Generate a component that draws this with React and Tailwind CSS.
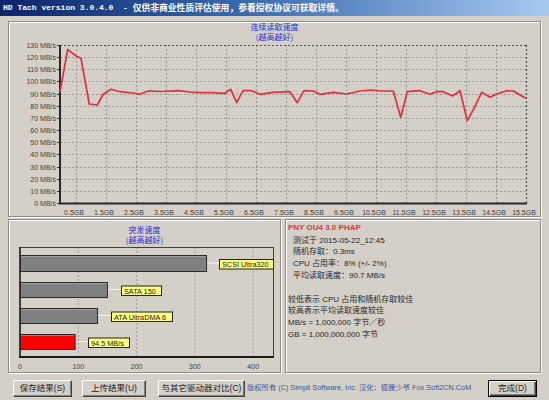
import React from "react";

const pts = [[60,92],[67.7,49.3],[76,56],[81,58.3],[89.3,104],[97.3,105],[103,94.5],[111,89.3],[120,91.7],[133,93],[140,94.3],[148,91],[163,91.5],[178,90.7],[190,92],[200,92.7],[212,92.7],[225,93.3],[230.7,89.3],[236.7,102.7],[243,90.7],[251.7,90.7],[260,94.3],[273,92.3],[290,91.7],[297.3,102.7],[304,90.7],[313,91],[320,94.3],[333,92.3],[346.7,94],[360,91],[371.7,90],[380,91],[393.3,91],[400.7,117.3],[407.3,91.7],[420,90.7],[430,94.3],[436.7,91.7],[443.3,91.7],[452.7,96],[460,90.7],[467.3,120.7],[474,108.3],[481.7,92.3],[490,97.3],[496.7,94],[506.7,90.7],[513.3,91],[525.7,98.3]];

const PY = (v) => Math.round(203 - v * 1.2154) + 0.5;

function ReadChart() {
  const yl = [];
  for (let v = 0; v <= 130; v += 10) yl.push(v);
  const xs = [];
  for (let i = 0; i <= 15; i++) xs.push(i);
  return (
    <svg width="532" height="175" className="block" fontFamily="'Liberation Sans', sans-serif">
      <g transform="translate(-9,-41)">
        {yl.map((v) =>
          v > 0 && v < 130 ? (
            <line key={"h" + v} x1="60" x2="526" y1={PY(v)} y2={PY(v)} stroke="#9c9a94" strokeWidth="1" strokeDasharray="2,2" />
          ) : null
        )}
        {xs.map((i) =>
          i < 15 ? (
            <line key={"v" + i} x1={76.5 + 30 * i} x2={76.5 + 30 * i} y1="45" y2="203" stroke="#9c9a94" strokeWidth="1" strokeDasharray="2,2" />
          ) : null
        )}
        <line x1="60" x2="526" y1="45.5" y2="45.5" stroke="#505050" strokeWidth="1.2" strokeDasharray="2,2" />
        <line x1="526.5" x2="526.5" y1="45" y2="203" stroke="#505050" strokeWidth="1.2" strokeDasharray="2,2" />
        <line x1="60" x2="60" y1="45" y2="204" stroke="#2a2a2a" strokeWidth="2" />
        <line x1="59" x2="527" y1="203.5" y2="203.5" stroke="#2a2a2a" strokeWidth="2" />
        {yl.map((v) => (
          <g key={"yl" + v}>
            <line x1="57" x2="60" y1={PY(v)} y2={PY(v)} stroke="#2a2a2a" strokeWidth="1" />
            <text x="56" y={PY(v) + 2.5} fontSize="7" fill="#404040" textAnchor="end">{v} MB/s</text>
          </g>
        ))}
        {xs.map((i) => (
          <text key={"xl" + i} x={74 + 30 * i} y="214.5" fontSize="7" fill="#404040" textAnchor="middle">{i}.5GB</text>
        ))}
        <polyline points={pts.map((p) => p.join(",")).join(" ")} fill="none" stroke="#e0303c" strokeWidth="1.7" strokeLinejoin="round" />
      </g>
    </svg>
  );
}

function BurstChart() {
  const s = 0.583;
  const bars = [
    { y: 255, h: 16, v: 320, fill: "#808080", label: "SCSI Ultra320", lx: 219, lw: 54, ly: 259 },
    { y: 282, h: 15, v: 150, fill: "#808080", label: "SATA 150", lx: 121, lw: 40, ly: 285.5 },
    { y: 308, h: 15, v: 133, fill: "#808080", label: "ATA UltraDMA 6", lx: 111, lw: 61, ly: 311.5 },
    { y: 334, h: 15, v: 94.5, fill: "#ff0000", label: "94.5 MB/s", lx: 88, lw: 41, ly: 337.5 },
  ];
  return (
    <svg width="271" height="127" className="block" fontFamily="'Liberation Sans', sans-serif">
      <g transform="translate(-9,-245)">
        {[100, 200, 300, 400].map((v) => (
          <line key={v} x1={20 + v * s} x2={20 + v * s} y1="247" y2="357" stroke="#9c9a94" strokeWidth="1" strokeDasharray="2,2" />
        ))}
        <line x1="20" x2="274" y1="247.5" y2="247.5" stroke="#404040" strokeWidth="1" />
        <line x1="273.5" x2="273.5" y1="247" y2="357" stroke="#404040" strokeWidth="1" />
        <line x1="20" x2="20" y1="247" y2="358" stroke="#1a1a1a" strokeWidth="1.6" />
        <line x1="19" x2="274" y1="357" y2="357" stroke="#1a1a1a" strokeWidth="2" />
        {bars.map((b) => {
          const x2 = 20 + b.v * s;
          const cy = b.y + b.h / 2;
          return (
            <g key={b.label}>
              <line x1={x2} x2={b.lx} y1={cy} y2={cy} stroke="#f4f4f4" strokeWidth="1" />
              <rect x="20.5" y={b.y + 0.5} width={x2 - 20.5} height={b.h} fill={b.fill} stroke="#2a2a2a" strokeWidth="1" />
              <line x1="21.5" x2={x2 - 1} y1={b.y + 1.5} y2={b.y + 1.5} stroke={b.fill === "#ff0000" ? "#ff5a5a" : "#a0a0a0"} strokeWidth="1" />
              <rect x={b.lx + 0.5} y={b.ly + 0.5} width={b.lw} height="9.5" fill="#ffff80" stroke="#202020" strokeWidth="1" />
              <text x={b.lx + 3} y={b.ly + 8} fontSize="7.3" fill="#1a1a1a">{b.label}</text>
            </g>
          );
        })}
        {[0, 100, 200, 300, 400].map((v) => (
          <text key={"t" + v} x={20 + v * s} y="368.5" fontSize="7" fill="#404040" textAnchor="middle">{v}</text>
        ))}
      </g>
    </svg>
  );
}

const etched = "border border-[#8e8b84] shadow-[inset_1px_1px_0_#ffffff,1px_1px_0_#ffffff]";
const btn = "h-[17px] flex items-center justify-center bg-[#d4d0c8] border border-t-white border-l-white border-r-[#404040] border-b-[#404040] shadow-[inset_-1px_-1px_0_#808080] text-[8.5px] text-[#222] whitespace-nowrap";

export default function App() {
  return (
    <div className="w-[549px] h-[400px] bg-[#d4d0c8] overflow-hidden flex flex-col font-['Liberation_Sans','Noto_Sans_CJK_SC',sans-serif]">
      <div className="h-[16px] shrink-0 flex items-center pl-[3px] bg-[linear-gradient(to_right,#0a246a,#3a6ab0_45%,#a6caf0)] text-white whitespace-nowrap leading-[16px]">
        <span className="font-['Liberation_Mono',monospace] font-bold text-[8px]">HD Tach version 3.0.4.0&nbsp;&nbsp;-&nbsp;</span>
        <span className="font-['Noto_Sans_CJK_SC',sans-serif] font-bold text-[8.8px]">仅供非商业性质评估使用，参看授权协议可获取详情。</span>
      </div>

      <div className={"ml-[8px] mt-[5px] w-[533px] h-[196px] shrink-0 flex flex-col " + etched}>
        <div className="h-[19px] flex flex-col items-center text-[8px] leading-[9.5px] text-[#2828d8] font-['Noto_Sans_CJK_SC',sans-serif]">
          <span>连续读取速度</span>
          <span>(越高越好)</span>
        </div>
        <ReadChart />
      </div>

      <div className="ml-[8px] mt-[2px] h-[154px] shrink-0 flex gap-[4px]">
        <div className={"w-[273px] h-full flex flex-col " + etched}>
          <div className="h-[25px] pt-[5px] flex flex-col items-center text-[8px] leading-[10px] text-[#2828d8] font-['Noto_Sans_CJK_SC',sans-serif]">
            <span>突发速度</span>
            <span>(越高越好)</span>
          </div>
          <BurstChart />
        </div>
        <div className={"w-[256px] h-full pt-[2px] pl-[2px] flex flex-col text-[8px] leading-[11.7px] text-[#262626] whitespace-nowrap " + etched}>
          <span className="font-bold text-[#e8303c]">PNY OU4 3.0 PHAP</span>
          <span className="pl-[5px] mt-[1px]">测试于 2015-05-22_12:45</span>
          <span className="pl-[5px]">随机存取：0.3ms</span>
          <span className="pl-[5px]">CPU 占用率：8% (+/- 2%)</span>
          <span className="pl-[5px]">平均读取速度：90.7 MB/s</span>
          <span className="h-[12px]"></span>
          <span>较低表示 CPU 占用和随机存取较佳</span>
          <span>较高表示平均读取速度较佳</span>
          <span>MB/s = 1,000,000 字节／秒</span>
          <span>GB = 1,000,000,000 字节</span>
        </div>
      </div>

      <div className="mt-[7px] h-[17px] shrink-0 flex items-center pl-[13px]">
        <div className={btn + " w-[59px]"}>保存结果(S)</div>
        <div className={btn + " w-[64px] ml-[10px]"}>上传结果(U)</div>
        <div className={btn + " w-[87px] ml-[12px]"}>与其它驱动器对比(C)</div>
        <div className="ml-[2px] w-[240px] text-[7.3px] text-[#3a55a0] whitespace-nowrap">版权所有 (C) Simpli Software, Inc. 汉化：狐狸少爷 Fox.Soft2CN.CoM</div>
        <div className="ml-[1px] w-[49px] h-[17px] flex items-center justify-center border border-black bg-[#d4d0c8] shadow-[inset_1px_1px_0_#ffffff,inset_-1px_-1px_0_#404040,inset_-2px_-2px_0_#808080] text-[8.5px] text-[#222]">完成(D)</div>
      </div>
    </div>
  );
}
